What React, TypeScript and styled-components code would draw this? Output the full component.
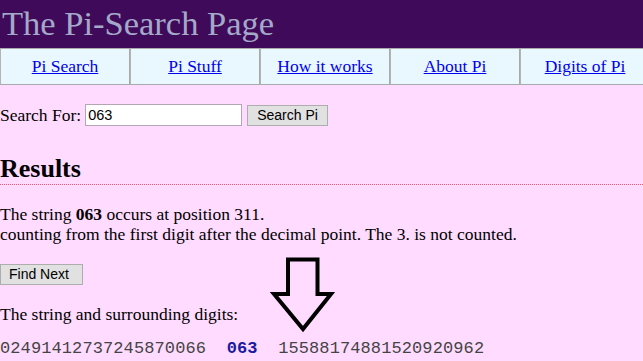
import * as React from "react"
import styled, { createGlobalStyle } from "styled-components"

const GlobalStyle = createGlobalStyle`
  html, body {
    margin: 0;
    padding: 0;
    background: #ffdcff;
    overflow: hidden;
  }
  body {
    font-family: "Liberation Serif", "Times New Roman", serif;
    font-size: 17.5px;
    color: #000;
  }
`

const Page = styled.div`
  position: relative;
  width: 643px;
  height: 361px;
  overflow: hidden;
`

const Header = styled.header`
  height: 48px;
  background: #400a5a;
  display: flex;
  align-items: center;
  padding-left: 2px;
`

const Title = styled.h1`
  margin: 0;
  font-weight: normal;
  font-size: 34.5px;
  color: #a4a9c9;
  line-height: 1;
  padding-bottom: 2px;
`

const Nav = styled.nav`
  display: grid;
  grid-template-columns: repeat(5, 130px);
  width: 650px;
  background: #e9f8ff;
`

const NavCell = styled.div`
  height: 35px;
  border: 1px solid #a9a9a9;
  border-left-color: #b4b4b4;
  display: flex;
  align-items: center;
  justify-content: center;
`

const NavLink = styled.a`
  color: #0000ee;
  text-decoration: underline;
`

const SearchForm = styled.form`
  display: flex;
  align-items: center;
  height: 22px;
  margin-top: 19px;
`

const Label = styled.label`
  margin-right: 4px;
`

const TextInput = styled.input`
  width: 157px;
  height: 22px;
  box-sizing: border-box;
  border: 1px solid #b2a6b2;
  background: #fff;
  font-family: "Liberation Sans", Arial, sans-serif;
  font-size: 14.5px;
  padding: 0 2px;
  margin: 0 5px 0 0;
`

const Button = styled.button`
  height: 21px;
  box-sizing: border-box;
  background: #e1e1e1;
  border: 1px solid #adadad;
  font-family: "Liberation Sans", Arial, sans-serif;
  font-size: 14px;
  color: #000;
  padding: 0 9px;
  margin: 0;
  display: inline-flex;
  align-items: center;
`

const FindButton = styled(Button)`
  width: 83px;
  padding: 0 8px;
`

const Results = styled.h2`
  margin: 29px 0 0;
  font-size: 26px;
  line-height: 28px;
  font-weight: bold;
  padding-bottom: 1px;
  border-bottom: 1px dotted #e4587a;
`

const Text = styled.p`
  margin: 19px 0 0;
  line-height: 20px;
`

const ButtonRow = styled.div`
  margin-top: 19px;
`

const Digits = styled.div`
  margin-top: 15px;
  font-family: "Liberation Mono", "Courier New", monospace;
  font-size: 17px;
  letter-spacing: 0.1px;
  color: #444;
  white-space: pre;
`

const Match = styled.b`
  color: #1b1ba0;
`

const Arrow = styled.svg`
  position: absolute;
  left: 268px;
  top: 254px;
`

const links = ["Pi Search", "Pi Stuff", "How it works", "About Pi", "Digits of Pi"]

export default function App() {
  return (
    <Page>
      <GlobalStyle />
      <Header>
        <Title>The Pi-Search Page</Title>
      </Header>
      <Nav>
        {links.map((l) => (
          <NavCell key={l}>
            <NavLink href="#">{l}</NavLink>
          </NavCell>
        ))}
      </Nav>
      <SearchForm onSubmit={(e) => e.preventDefault()}>
        <Label>Search For:</Label>
        <TextInput defaultValue="063" />
        <Button type="submit">Search Pi</Button>
      </SearchForm>
      <Results>Results</Results>
      <Text>
        The string <b>063</b> occurs at position 311.
        <br />
        counting from the first digit after the decimal point. The 3. is not counted.
      </Text>
      <ButtonRow>
        <FindButton>Find Next</FindButton>
      </ButtonRow>
      <Text>The string and surrounding digits:</Text>
      <Digits>
        {"02491412737245870066  "}
        <Match>063</Match>
        {"  15588174881520920962"}
      </Digits>
      <Arrow width="70" height="82" viewBox="0 0 70 82">
        <path
          d="M20 5.5 H49.5 V40 H63 L35 75 L6 40 H20 Z"
          fill="none"
          stroke="#000"
          strokeWidth="4"
          strokeLinejoin="miter"
        />
      </Arrow>
    </Page>
  )
}
